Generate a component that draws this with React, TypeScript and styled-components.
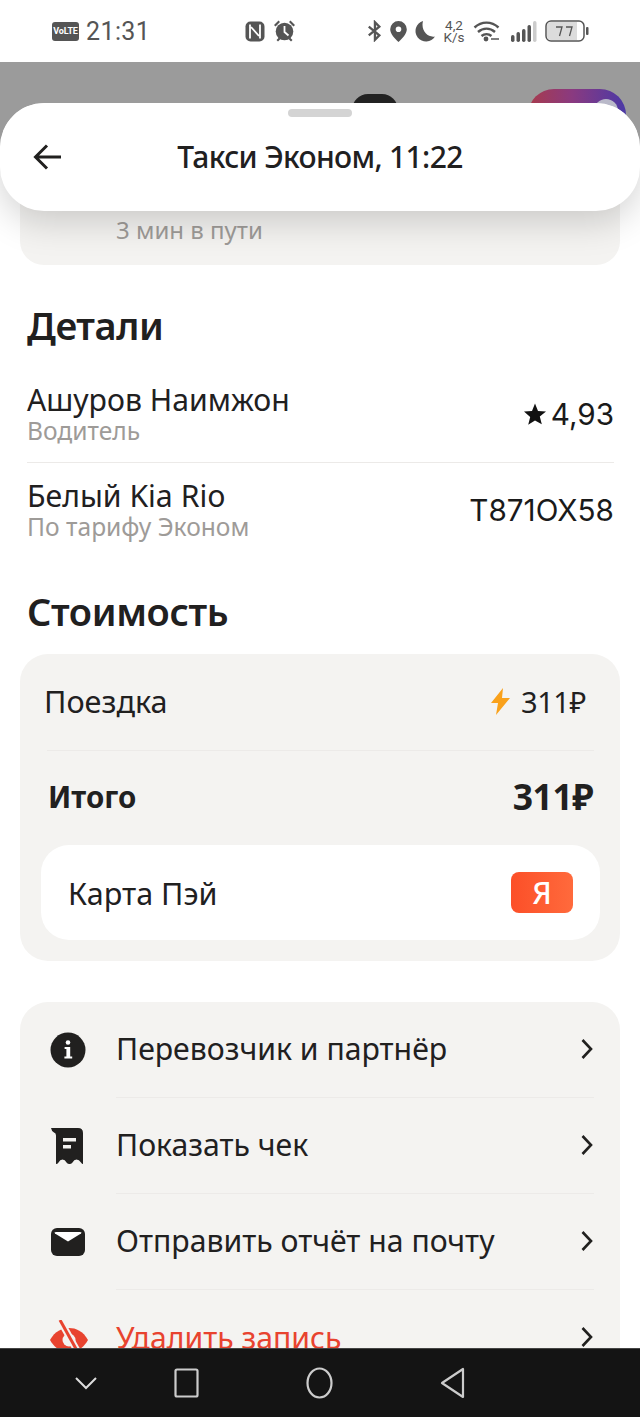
import styled, { createGlobalStyle } from 'styled-components';

const GlobalStyle = createGlobalStyle`
  html, body {
    margin: 0;
    padding: 0;
    background: #fff;
  }
  * {
    box-sizing: border-box;
  }
`;

const TEXT_COLOR = '#21201f';
const GREY_TEXT = '#9e9b98';
const CARD_BG = '#f4f3f1';
const LINE = '#eceae8';

const Screen = styled.div`
  width: 640px;
  height: 1417px;
  display: flex;
  flex-direction: column;
  overflow: hidden;
  font-family: 'Noto Sans', 'Liberation Sans', sans-serif;
  color: ${TEXT_COLOR};
`;

/* status bar */
const StatusBar = styled.div`
  height: 62px;
  flex: none;
  background: #fff;
  display: flex;
  align-items: center;
  padding: 0 50px 0 52px;
  color: #555;
`;
const VoLte = styled.span`
  width: 27px;
  height: 19px;
  border-radius: 3px;
  background: #555;
  color: #fff;
  font: 700 9px 'Roboto', sans-serif;
  letter-spacing: -0.2px;
  display: flex;
  align-items: center;
  justify-content: center;
  margin-right: 7px;
`;
const Clock = styled.span`
  font: 400 25px 'Roboto', sans-serif;
  letter-spacing: 0.4px;
  width: 159px;
`;
const StatusGroup = styled.div<{ $gap: number; $width?: number }>`
  display: flex;
  align-items: center;
  gap: ${(p) => p.$gap}px;
  width: ${(p) => (p.$width ? `${p.$width}px` : 'auto')};
`;
const Speed = styled.span`
  font: 400 13.5px/12px 'Roboto', sans-serif;
  text-align: center;
  width: 22px;
`;
const SignalIcon = styled.svg`
  margin-left: 3px;
`;

/* stuff behind the sheet */
const Backdrop = styled.div`
  flex: 1;
  min-height: 0;
  position: relative;
  background: #9b9b9b;
  padding-top: 41px;
`;
const BackPill = styled.div`
  position: absolute;
  left: 352px;
  top: 32px;
  width: 46px;
  height: 30px;
  border-radius: 16px 16px 0 0;
  background: #222;
`;
const BackApp = styled.div`
  position: absolute;
  left: 528px;
  top: 27px;
  width: 98px;
  height: 40px;
  border-radius: 26px 26px 0 0;
  background: linear-gradient(90deg, #a83b4c 0%, #8a3a80 45%, #4b39a6 100%);
  overflow: hidden;

  &::after {
    content: '';
    position: absolute;
    left: 66px;
    top: 10px;
    width: 24px;
    height: 24px;
    border-radius: 50%;
    background: #b9b9c9;
  }
`;

const Sheet = styled.div`
  position: relative;
  height: 100%;
  background: #fff;
  border-radius: 44px 44px 0 0;
  overflow: hidden;
`;
const Header = styled.header`
  position: absolute;
  top: 0;
  left: 0;
  right: 0;
  height: 108px;
  background: #fff;
  border-radius: 44px;
  box-shadow: 0 10px 36px rgba(0, 0, 0, 0.18);
  display: flex;
  align-items: center;
  justify-content: center;
  z-index: 1;
`;
const Grabber = styled.div`
  position: absolute;
  top: 6px;
  left: 288px;
  width: 64px;
  height: 8px;
  border-radius: 4px;
  background: #d4d4d4;
`;
const BackButton = styled.div`
  position: absolute;
  left: 32px;
  top: 38px;
  width: 32px;
  height: 32px;
`;
const Title = styled.h1`
  margin: 0;
  font-size: 30px;
  font-weight: 500;
  letter-spacing: -0.65px;
  line-height: 108px;
`;

const Content = styled.div`
  padding: 0 20px;
  display: flex;
  flex-direction: column;
`;
const TripCard = styled.div`
  height: 162px;
  background: ${CARD_BG};
  border-radius: 24px;
  padding: 111px 0 0 96px;
  font-size: 24px;
  line-height: 32px;
  color: ${GREY_TEXT};
`;
const SectionTitle = styled.h2<{ $top: number; $bottom: number }>`
  margin: ${(p) => p.$top}px 0 ${(p) => p.$bottom}px 7px;
  font-size: 38px;
  line-height: 48px;
  font-weight: 600;
  letter-spacing: -0.4px;
`;
const DetailRow = styled.div<{ $divided?: boolean }>`
  margin: 0 6px 0 7px;
  height: 97px;
  padding-bottom: ${(p) => (p.$divided ? 0 : 4)}px;
  display: flex;
  align-items: center;
  justify-content: space-between;
  border-bottom: ${(p) => (p.$divided ? `1px solid ${LINE}` : 'none')};
`;
const DetailName = styled.div`
  font-size: 30.2px;
  line-height: 34px;
`;
const DetailNote = styled.div`
  font-size: 24.6px;
  line-height: 28px;
  color: ${GREY_TEXT};
`;
const DetailValue = styled.div`
  font-family: 'Inter', sans-serif;
  font-size: 29.7px;
  display: flex;
  align-items: center;
  gap: 5px;
  color: #1a1a1a;
`;

const CostCard = styled.div`
  height: 307px;
  background: ${CARD_BG};
  border-radius: 28px;
  padding: 0 20px 0 21px;
  display: flex;
  flex-direction: column;
`;
const RideRow = styled.div`
  height: 97px;
  margin: 0 6px;
  padding: 0 8px 2px 0;
  display: flex;
  align-items: center;
  justify-content: space-between;
  border-bottom: 1px solid ${LINE};
  font-size: 30.6px;
`;
const RideLabel = styled.span`
  margin-left: -3px;
`;
const RidePrice = styled.span`
  display: flex;
  align-items: center;
  gap: 10px;
  font-size: 29px;
  letter-spacing: -0.4px;
`;
const TotalRow = styled.div`
  height: 94px;
  margin: 0 7px;
  padding-bottom: 4px;
  display: flex;
  align-items: center;
  justify-content: space-between;
  font-weight: 700;
`;
const TotalLabel = styled.span`
  font-size: 29.5px;
`;
const TotalValue = styled.span`
  font-size: 35.5px;
  letter-spacing: -0.5px;
`;
const PayCard = styled.div`
  height: 95px;
  background: #fff;
  border-radius: 28px;
  padding: 0 27px;
  display: flex;
  align-items: center;
  justify-content: space-between;
  font-size: 30.5px;
`;
const YaBadge = styled.span`
  width: 62px;
  height: 41px;
  border-radius: 8px;
  background: linear-gradient(90deg, #fc4f28, #ff6a3c);
  color: #fff;
  font-size: 30px;
  font-weight: 500;
  line-height: 41px;
  display: flex;
  align-items: center;
  justify-content: center;
`;

const LinksCard = styled.div`
  margin-top: 41px;
  background: ${CARD_BG};
  border-radius: 28px 28px 0 0;
  padding: 0 26px 0 30px;
`;
const LinkRow = styled.div`
  height: 96px;
  display: flex;
  align-items: center;
  gap: 30px;
`;
const LinkIcon = styled.span`
  width: 36px;
  height: 36px;
  flex: none;
`;
const LinkBody = styled.div<{ $last?: boolean; $danger?: boolean }>`
  flex: 1;
  height: 100%;
  padding-bottom: 2px;
  display: flex;
  align-items: center;
  justify-content: space-between;
  font-size: 30.2px;
  color: ${(p) => (p.$danger ? '#e8432f' : TEXT_COLOR)};
  border-bottom: ${(p) => (p.$last ? 'none' : `1px solid ${LINE}`)};
`;
const Chevron = () => (
  <svg width="14" height="22" viewBox="0 0 14 22" fill="none" stroke={TEXT_COLOR} strokeWidth="2.6">
    <path d="M2.500 2 L11 11 L2.500 20" />
  </svg>
);

/* navigation bar */
const NavBar = styled.nav`
  height: 69px;
  flex: none;
  background: #141414;
  border-top: 1px solid #444;
  display: flex;
  align-items: center;
  padding: 0 0 0 74px;
`;
const NavSlot = styled.span<{ $width: number }>`
  width: ${(p) => p.$width}px;
  display: flex;
`;

const links = [
  {
    label: 'Перевозчик и партнёр',
    icon: (
      <svg viewBox="0 0 36 36" width="36" height="36">
        <circle cx="18" cy="18" r="17.500" fill={TEXT_COLOR} />
        <circle cx="18" cy="10.500" r="2.300" fill="#fff" />
        <path d="M14.600 15h5.600v9.400h2v2h-7.800v-2h2v-7.400h-1.800z" fill="#fff" />
      </svg>
    ),
  },
  {
    label: 'Показать чек',
    icon: (
      <svg viewBox="0 0 36 36" width="36" height="36">
        <path
          d="M1 0h27q5 0 5 5v31q-1 0-2-1.500-2-3-4.500-3t-4 3q-1.200 1.500-3 1.500t-3-1.500q-1.500-3-4-3t-4 3Q7.500 36 6 36V7.500Q6 5 4 4.500 1.500 3 1 0z"
          fill={TEXT_COLOR}
        />
        <path d="M13 10h13v3.500H13zM13 17h8v3.500h-8z" fill="#f4f3f1" />
      </svg>
    ),
  },
  {
    label: 'Отправить отчёт на почту',
    icon: (
      <svg viewBox="0 0 36 36" width="36" height="36">
        <rect x="1" y="4" width="34" height="28" rx="6" fill={TEXT_COLOR} />
        <path d="M6 8h24q2.500 0 1 1.500L18 17.500 5 9.500Q3.500 8 6 8z" fill="#fff" />
      </svg>
    ),
  },
  {
    label: 'Удалить запись',
    danger: true,
    icon: (
      <svg viewBox="0 0 38 36" width="38" height="36">
        <path d="M0 20C5 11 12 8 19 8s14 3 19 12c-5 9-12 12-19 12S5 29 0 20z" fill="#e8432f" />
        <circle cx="19" cy="20" r="6.500" fill="#f4f3f1" />
        <path d="M10 0l20 36" stroke="#f4f3f1" strokeWidth="7" />
        <path d="M10 0l20 36" stroke="#e8432f" strokeWidth="3" />
      </svg>
    ),
  },
];

const App = () => {
  return (
    <Screen>
      <GlobalStyle />
      <StatusBar>
        <VoLte>VoLTE</VoLte>
        <Clock>21:31</Clock>
        <StatusGroup $gap={8} $width={122}>
          <svg width="20" height="21" viewBox="0 0 20 21">
            <rect x="0.500" y="0.500" width="19" height="20" rx="5" fill="#555" />
            <path d="M5 3.500v14M15 3.500v14M6 6l8 9" stroke="#fff" strokeWidth="1.800" fill="none" />
          </svg>
          <svg width="23" height="22" viewBox="0 0 23 22" fill="#555">
            <circle cx="11.500" cy="11.500" r="8.800" />
            <path d="M1 5l4.500-4.500 1.500 1.500-4.500 4.500zM22 5L17.500.5 16 2l4.500 4.500z" />
            <path d="M3.500 20l2.500-2.500 1.500 1.500L5 21.500zM19.500 20L17 17.500 15.500 19l2.500 2.500z" />
            <path d="M11.500 6v6l4 3.500" stroke="#fff" strokeWidth="1.800" fill="none" />
          </svg>
        </StatusGroup>
        <StatusGroup $gap={8}>
          <svg width="15" height="22" viewBox="0 0 17 22" fill="none" stroke="#555" strokeWidth="2.600">
            <path d="M2 6l12 10-5 5V1l5 5L2 16" />
          </svg>
          <svg width="17" height="21" viewBox="0 0 17 21" fill="#555">
            <path
              fillRule="evenodd"
              d="M8.500 0a8.300 8.300 0 0 1 8.300 8.300C16.800 13 12 18 8.500 21 5 18 .2 13 .2 8.300A8.300 8.300 0 0 1 8.500 0zm0 5.500a2.800 2.800 0 1 0 0 5.600 2.800 2.800 0 0 0 0-5.600z"
            />
          </svg>
          <svg width="20" height="21" viewBox="0 0 20 21" fill="#555">
            <path d="M8 0a10.500 10.500 0 1 0 12 15.500C13 17 5.500 10 8 0z" />
          </svg>
          <Speed>
            4,2
            <br />
            K/s
          </Speed>
          <svg width="27" height="21" viewBox="0 0 27 21" fill="none" stroke="#555" strokeWidth="2.400">
            <path d="M1.500 6.500c7-6.500 17-6.500 24 0M5 11c5-4.500 12-4.500 17 0M8.500 15c3-2.500 7-2.500 10 0" />
            <circle cx="13" cy="18" r="2.400" fill="#555" stroke="none" />
            <path d="M18 18h8" strokeWidth="1.500" />
          </svg>
          <SignalIcon width="26" height="21" viewBox="0 0 26 21">
            <rect x="0" y="14" width="3.500" height="7" rx="1.700" fill="#555" />
            <rect x="5.500" y="11" width="3.500" height="10" rx="1.700" fill="#555" />
            <rect x="11" y="8" width="3.500" height="13" rx="1.700" fill="#555" />
            <rect x="16.500" y="4" width="3.500" height="17" rx="1.700" fill="#555" />
            <rect x="22" y="0" width="3.500" height="21" rx="1.700" fill="#ccc" />
          </SignalIcon>
          <svg width="44" height="22" viewBox="0 0 44 22">
            <rect x="1" y="1" width="38" height="20" rx="5" fill="#fff" stroke="#555" strokeWidth="1.500" />
            <path d="M2 6q0-4 4-4h26v18H6q-4 0-4-4z" fill="#dcdcdc" />
            <path d="M11 7h6l-2.500 9M21 7h6l-2.500 9" stroke="#555" strokeWidth="1.300" fill="none" />
            <rect x="41" y="7" width="2.500" height="8" rx="1" fill="#555" />
          </svg>
        </StatusGroup>
      </StatusBar>

      <Backdrop>
        <BackPill />
        <BackApp />
        <Sheet>
          <Header>
            <Grabber />
            <BackButton>
              <svg width="32" height="32" viewBox="0 0 32 32" fill="none" stroke={TEXT_COLOR} strokeWidth="3">
                <path d="M29 16H4M15 4.500L3.500 16 15 27.500" />
              </svg>
            </BackButton>
            <Title>Такси Эконом, 11:22</Title>
          </Header>
          <Content>
            <TripCard>3 мин в пути</TripCard>
            <SectionTitle $top={36} $bottom={17}>
              Детали
            </SectionTitle>
            <DetailRow $divided>
              <div>
                <DetailName>Ашуров Наимжон</DetailName>
                <DetailNote>Водитель</DetailNote>
              </div>
              <DetailValue>
                <svg width="22" height="22" viewBox="0 0 22 22">
                  <path d="M11 .5l3 7.500 8 .5-6.200 5 2 7.800L11 17.500 4.200 21.800l2-7.800L0 8.500l8-.5z" fill="#111" />
                </svg>
                4,93
              </DetailValue>
            </DetailRow>
            <DetailRow>
              <div>
                <DetailName>Белый Kia Rio</DetailName>
                <DetailNote>По тарифу Эконом</DetailNote>
              </div>
              <DetailValue>Т871ОХ58</DetailValue>
            </DetailRow>
            <SectionTitle $top={27} $bottom={19}>
              Стоимость
            </SectionTitle>
            <CostCard>
              <RideRow>
                <RideLabel>Поездка</RideLabel>
                <RidePrice>
                  <svg width="21" height="27" viewBox="0 0 21 27">
                    <path d="M13 0L1 15h7l-2 12L20 10h-8z" fill="#f9a11b" />
                  </svg>
                  311₽
                </RidePrice>
              </RideRow>
              <TotalRow>
                <TotalLabel>Итого</TotalLabel>
                <TotalValue>311₽</TotalValue>
              </TotalRow>
              <PayCard>
                Карта Пэй
                <YaBadge>Я</YaBadge>
              </PayCard>
            </CostCard>
            <LinksCard>
              {links.map((link, i) => (
                <LinkRow key={link.label}>
                  <LinkIcon>{link.icon}</LinkIcon>
                  <LinkBody $last={i === links.length - 1} $danger={link.danger}>
                    {link.label}
                    <Chevron />
                  </LinkBody>
                </LinkRow>
              ))}
            </LinksCard>
          </Content>
        </Sheet>
      </Backdrop>

      <NavBar>
        <NavSlot $width={100}>
          <svg width="24" height="14" viewBox="0 0 24 14" fill="none" stroke="#ddd" strokeWidth="2">
            <path d="M2 2l10 10L22 2" />
          </svg>
        </NavSlot>
        <NavSlot $width={132}>
          <svg width="25" height="30" viewBox="0 0 25 30" fill="none" stroke="#ccc" strokeWidth="2.200">
            <rect x="1.500" y="1.500" width="22" height="27" rx="1.500" />
          </svg>
        </NavSlot>
        <NavSlot $width={134}>
          <svg width="27" height="32" viewBox="0 0 27 32" fill="none" stroke="#ccc" strokeWidth="2.200">
            <ellipse cx="13.500" cy="16" rx="12" ry="14.500" />
          </svg>
        </NavSlot>
        <NavSlot $width={30}>
          <svg width="25" height="32" viewBox="0 0 25 32" fill="none" stroke="#ccc" strokeWidth="2.200" strokeLinejoin="round">
            <path d="M23 2v28L2 16z" />
          </svg>
        </NavSlot>
      </NavBar>
    </Screen>
  );
};

export default App;
